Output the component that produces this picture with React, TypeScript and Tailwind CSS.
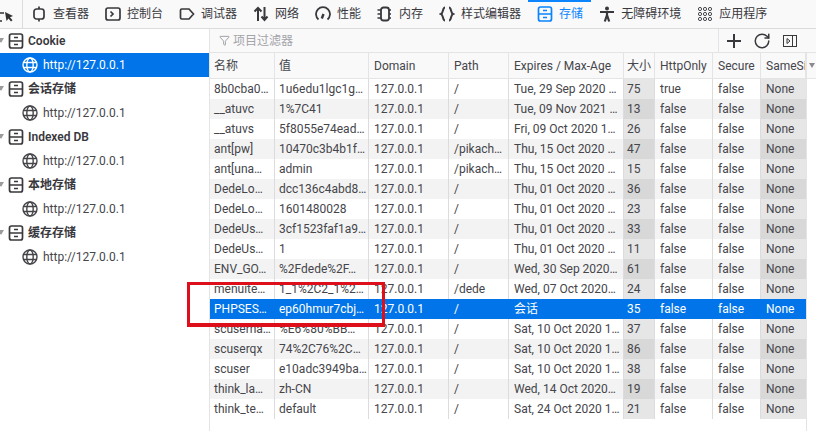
import React from 'react'
import { RotateCw, Filter } from 'lucide-react'

const font = "[font-family:Roboto,'Noto_Sans_CJK_SC',sans-serif]"

// Devtools tool icons, all drawn on a 16x16 box
const icons: { [key: string]: React.ReactNode } = {
  inspector: (
    <>
      <rect x="3" y="3" width="10" height="10" rx="2.500" />
      <path d="M8 0.500V3M8 13v2.500" />
    </>
  ),
  console: (
    <>
      <rect x="1" y="2" width="14" height="12" rx="2" />
      <path d="M5.500 5.500 8 8l-2.500 2.500" />
    </>
  ),
  debugger: <path d="M2.800 3H10l4.500 5-4.500 5H2.800a1.300 1.300 0 0 1-1.300-1.300V4.300A1.300 1.300 0 0 1 2.800 3z" />,
  network: <path d="M5 15V2M1.500 5.500 5 2l3.500 3.500M11.500 1v13M8.500 10.500l3 3.500 3-3.500" strokeWidth="2" />,
  performance: (
    <>
      <path d="M3.500 13.500a7 7 0 1 1 9 0" strokeWidth="1.800" />
      <path d="M6.800 12.500l1.700-4.500" strokeWidth="2.400" />
    </>
  ),
  memory: (
    <>
      <rect x="4" y="1.500" width="8" height="13" rx="2.500" strokeWidth="1.800" />
      <path d="M0.500 4H4M0.500 8H4M0.500 12H4M12 4h2M12 8h2M12 12h2" />
    </>
  ),
  style: <path d="M6 1.500C3.500 1.500 4.500 7 2 8c2.500 1 1.500 6.500 4 6.500M10 1.500c2.500 0 1.500 5.500 4 6.500-2.500 1-1.500 6.500-4 6.500" strokeWidth="2" />,
  storage: (
    <>
      <rect x="1.500" y="1" width="13" height="14" rx="2" />
      <path d="M1.500 8h13M6 4.500h4M6 11.500h4" />
    </>
  ),
  a11y: (
    <>
      <circle cx="8" cy="2.500" r="2" fill="currentColor" stroke="none" />
      <path d="M1 6h14M8 5.500v4M8 9l-2.200 6.500M8 9l2.200 6.500" strokeWidth="2.200" />
    </>
  ),
  apps: (
    <g strokeWidth="0.900">
      <circle cx="3" cy="3" r="1.600" />
      <circle cx="8" cy="3" r="1.600" />
      <circle cx="13" cy="3" r="1.600" />
      <circle cx="3" cy="8" r="1.600" />
      <circle cx="8" cy="8" r="1.600" />
      <circle cx="13" cy="8" r="1.600" />
      <circle cx="3" cy="13" r="1.600" />
      <circle cx="8" cy="13" r="1.600" />
      <circle cx="13" cy="13" r="1.600" />
    </g>
  ),
}

const tabs = [
  { key: 'inspector', label: '查看器' },
  { key: 'console', label: '控制台' },
  { key: 'debugger', label: '调试器' },
  { key: 'network', label: '网络' },
  { key: 'performance', label: '性能' },
  { key: 'memory', label: '内存' },
  { key: 'style', label: '样式编辑器' },
  { key: 'storage', label: '存储', active: true },
  { key: 'a11y', label: '无障碍环境' },
  { key: 'apps', label: '应用程序' },
]

const ToolIcon = ({ name }: { name: string }) => (
  <svg viewBox="0 0 16 16" className="w-4 h-4 shrink-0" fill="none" stroke="currentColor" strokeWidth="1.700">
    {icons[name]}
  </svg>
)

const Globe = () => (
  <svg viewBox="0 0 16 16" className="w-4 h-4 shrink-0" fill="none" stroke="currentColor" strokeWidth="1.400">
    <circle cx="8" cy="8" r="7" />
    <ellipse cx="8" cy="8" rx="3.200" ry="7" />
    <path d="M1.500 5.500h13M1.500 10.500h13" />
  </svg>
)

const sidebar = [
  { title: 'Cookie', selected: true },
  { title: '会话存储' },
  { title: 'Indexed DB' },
  { title: '本地存储' },
  { title: '缓存存储' },
]

// [name, value, path, expires, size, httpOnly]
const rows: string[][] = [
  ['8b0cba0…', '1u6edu1lgc1g…', '/', 'Tue, 29 Sep 2020 …', '75', 'true'],
  ['__atuvc', '1%7C41', '/', 'Tue, 09 Nov 2021 …', '13', 'false'],
  ['__atuvs', '5f8055e74ead…', '/', 'Fri, 09 Oct 2020 1…', '26', 'false'],
  ['ant[pw]', '10470c3b4b1f…', '/pikach…', 'Thu, 15 Oct 2020 …', '47', 'false'],
  ['ant[una…', 'admin', '/pikach…', 'Thu, 15 Oct 2020 …', '15', 'false'],
  ['DedeLo…', 'dcc136c4abd8…', '/', 'Thu, 01 Oct 2020 …', '36', 'false'],
  ['DedeLo…', '1601480028', '/', 'Thu, 01 Oct 2020 …', '23', 'false'],
  ['DedeUs…', '3cf1523faf1a9…', '/', 'Thu, 01 Oct 2020 …', '33', 'false'],
  ['DedeUs…', '1', '/', 'Thu, 01 Oct 2020 …', '11', 'false'],
  ['ENV_GO…', '%2Fdede%2F…', '/', 'Wed, 30 Sep 2020…', '61', 'false'],
  ['menuite…', '1_1%2C2_1%2…', '/dede', 'Wed, 07 Oct 2020…', '24', 'false'],
  ['PHPSES…', 'ep60hmur7cbj…', '/', '会话', '35', 'false'],
  ['scuserna…', '%E6%80%BB…', '/', 'Sat, 10 Oct 2020 1…', '37', 'false'],
  ['scuserqx', '74%2C76%2C…', '/', 'Sat, 10 Oct 2020 1…', '86', 'false'],
  ['scuser', 'e10adc3949ba…', '/', 'Sat, 10 Oct 2020 1…', '38', 'false'],
  ['think_la…', 'zh-CN', '/', 'Wed, 14 Oct 2020…', '19', 'false'],
  ['think_te…', 'default', '/', 'Sat, 24 Oct 2020 1…', '21', 'false'],
]

const SELECTED_ROW = 11

const widths = ['w-[65px] pl-[4px]', 'w-[94px] pl-[4px]', 'w-[80px] pl-[5px]', 'w-[60px] pl-[5px]', 'w-[115px] pl-[5px]', 'w-[31px] pl-[3px]', 'w-[58px] pl-[5px]', 'w-[48px] pl-[5px]', 'w-[45px] pl-[5px]']
const headers = ['名称', '值', 'Domain', 'Path', 'Expires / Max-Age', '大小', 'HttpOnly', 'Secure', 'SameSit']

const App = () => {
  return (
    <div className={`relative w-[816px] h-[431px] overflow-hidden bg-white text-[12px] text-[#45454a] ${font}`}>
      {/* Toolbar */}
      <div className="h-[29px] flex items-center bg-[#f9f9fa] border-b border-[#dcdcde] overflow-hidden">
        <div className="w-[23px] h-full flex items-center border-r border-[#dcdcde] shrink-0">
          <svg viewBox="0 0 14 16" className="w-[14px] h-4 mt-[6px]" fill="none" stroke="#333" strokeWidth="1.500">
            <path d="M0 4h4M0 12h2" />
            <path d="M5 3l8 4-3 1.300 2.500 3-1.500 1.200-2.500-3-2 2.500z" fill="#333" stroke="none" />
          </svg>
        </div>
        <div className="flex items-center gap-4 pl-[8px]">
          {tabs.map(tab => (
            <div key={tab.key} className={`relative flex items-center gap-[6px] h-[28px] ${tab.active ? 'text-[#0a84ff]' : 'text-[#38383d]'}`}>
              {tab.active && <div className="absolute top-0 -left-[9px] -right-[8px] h-[2px] bg-[#0a84ff]"></div>}
              <ToolIcon name={tab.key} />
              <span>{tab.label}</span>
            </div>
          ))}
        </div>
      </div>

      <div className="flex">
        {/* Storage tree */}
        <div className="w-[210px] shrink-0 h-[402px] border-r border-[#e4e4e6]">
          {sidebar.map(section => (
            <div key={section.title}>
              <div className="h-[24px] flex items-center text-[#38383d]">
                <svg viewBox="0 0 8 6" className="w-[8px] h-[6px] shrink-0" fill="#9a9a9f">
                  <path d="M-2 0h6L1 5z" />
                </svg>
                <ToolIcon name="storage" />
                <span className="ml-[4px] font-semibold">{section.title}</span>
              </div>
              <div className={`h-[24px] flex items-center pl-[22px] gap-[5px] ${section.selected ? 'bg-[#0074e8] text-white' : 'text-[#45454a]'}`}>
                <Globe />
                <span>http://127.0.0.1</span>
              </div>
            </div>
          ))}
        </div>

        <div className="flex-1 min-w-0">
          {/* Filter bar */}
          <div className="h-[24px] flex items-center bg-[#f9f9fa] border-b border-[#e4e4e6]">
            <Filter className="w-[11px] h-[11px] ml-[9px] text-[#9a9a9f]" />
            <span className="ml-[3px] text-[#a3a3a8]">项目过滤器</span>
            <div className="ml-auto flex items-center h-full border-l border-[#e4e4e6] mr-[19px] pl-[8px] gap-[12px] text-[#38383d]">
              <svg viewBox="0 0 14 14" className="w-[14px] h-[14px]" fill="none" stroke="currentColor" strokeWidth="2">
                <path d="M0 7h14M7 0v14" />
              </svg>
              <RotateCw className="w-[18px] h-[18px]" strokeWidth={2} />
              <svg viewBox="0 0 14 14" className="w-[14px] h-[14px]" fill="none" stroke="currentColor">
                <rect x="0.500" y="1.500" width="13" height="11" />
                <path d="M9.500 1.500v11M4 4.500 7 7 4 9.500z" />
              </svg>
            </div>
          </div>

          {/* Header row */}
          <div className="h-[26px] flex bg-[#f9f9fa] border-b border-[#e4e4e6]">
            {headers.map((header, index) => (
              <div key={header} className={`${widths[index]} shrink-0 flex items-center overflow-hidden whitespace-nowrap border-r border-[#e4e4e6] last:border-r-0`}>
                {header}
              </div>
            ))}
            <div className="flex-1 flex items-center justify-end pr-[1px] border-l border-[#e4e4e6]">
              <svg viewBox="0 0 6 5" className="w-[6px] h-[5px]" fill="#8a8a8f">
                <path d="M0 0h6L3 5z" />
              </svg>
            </div>
          </div>

          {/* Cookie rows */}
          <div className="w-[597px] border-r border-[#e4e4e6] h-[352px]">
            {rows.map((row, index) => {
              const selected = index === SELECTED_ROW
              const striped = index % 2 === 1
              const cells = [row[0], row[1], '127.0.0.1', row[2], row[3], row[4], row[5], 'false', 'None']
              return (
                <div key={index} className={`h-[20px] flex ${selected ? 'bg-[#0074e8] text-white' : striped ? 'bg-[#f3f3f3]' : 'bg-white'}`}>
                  {cells.map((cell, cellIndex) => {
                    const sorted = cellIndex === 5 || cellIndex === 8
                    const shade = selected ? '' : sorted ? (striped ? 'bg-[#d8d8d8]' : 'bg-[#e6e6e6]') : ''
                    return (
                      <div key={cellIndex} className={`${widths[cellIndex]} ${shade} shrink-0 flex items-center overflow-hidden whitespace-nowrap border-r ${selected ? 'border-transparent' : 'border-[#dcdcde]'} last:border-r-0`}>
                        {cell}
                      </div>
                    )
                  })}
                </div>
              )
            })}
          </div>
        </div>
      </div>

      {/* Red annotation box drawn over the screenshot */}
      <div className="absolute left-[187px] top-[282px] w-[198px] h-[45px] border-[3px] border-b-[4px] border-[#dc0f1a]"></div>
    </div>
  )
}

export default App
